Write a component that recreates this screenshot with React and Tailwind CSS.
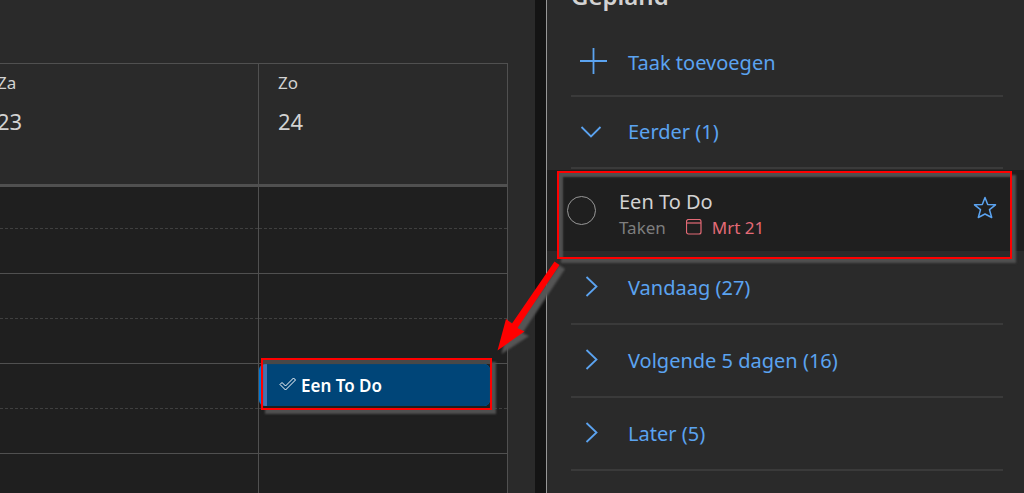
const days = [
  { name: "Za", date: "23" },
  { name: "Zo", date: "24" },
];

const groups = [
  { label: "Vandaag", count: 27 },
  { label: "Volgende 5 dagen", count: 16 },
  { label: "Later", count: 5 },
];

const slots = [0, 1, 2];

function Highlight({ className }) {
  return (
    <div
      aria-hidden="true"
      className={`pointer-events-none absolute z-10 border-2 border-[#ff0000] ${className}`}
    />
  );
}

function Arrow() {
  return (
    <svg
      viewBox="0 0 74 100"
      aria-hidden="true"
      className="pointer-events-none absolute top-[257px] -left-[42px] z-20 h-[100px] w-[74px]"
    >
      <path
        d="M62 5L68 9 25.500 73 32 76 4.500 94 12 62 19 66.500z"
        transform="translate(4 3)"
        fill="#555555"
        className="blur-[1px]"
      />
      <path d="M61.500 4.500L66.500 8 24.500 71 31.500 74.500 4.500 93.500 13 62 19 66.500z" fill="#ff0000" />
    </svg>
  );
}

function Chevron({ open }) {
  return (
    <svg viewBox="0 0 24 24" className="h-6 w-6 shrink-0" fill="none" stroke="currentColor" strokeWidth="1.8">
      {open ? <path d="M2.500 7l9.500 9.500L21.500 7" /> : <path d="M7.500 2l10 9.500-10 9.500" />}
    </svg>
  );
}

function SlotColumn({ children, className = "" }) {
  return (
    <div className={`relative bg-[#1f1f1f] ${className}`}>
      <div className="h-[42px] border-b border-dashed border-[#3f3f3f]" />
      {slots.map((slot) => (
        <div key={slot}>
          <div className="h-[45px] border-b border-[#505050]" />
          <div className="h-[45px] border-b border-dashed border-[#3f3f3f]" />
        </div>
      ))}
      {children}
    </div>
  );
}

function Calendar() {
  return (
    <section className="h-screen overflow-hidden bg-[#2a2a2a] pt-[63px] pr-[27px]">
      <div className="grid grid-cols-[258fr_250fr] border-t border-[#505050]">
        {days.map((day, i) => (
          <div
            key={day.name}
            className={`h-[120px] pt-[7px] text-[#d2d2d2] ${i === 0 ? "-ml-[3px]" : "border-x border-[#505050] pl-[19px]"}`}
          >
            <div className="text-[17px] leading-6">{day.name}</div>
            <div className="mt-2 text-[22px] leading-9">{day.date}</div>
          </div>
        ))}
      </div>
      <div className="grid grid-cols-[258fr_250fr] border-t-3 border-[#505050]">
        <SlotColumn />
        <SlotColumn className="border-x border-[#505050]">
          <button className="absolute top-[177px] right-[17px] left-0 h-[42px] overflow-hidden rounded-md bg-[#0078d4] pl-1 text-left text-[17px] font-semibold text-white">
            <span className="flex h-full items-center border-l-4 border-[#4472b0] bg-[#004578] pt-px pl-3">
              <svg viewBox="0 0 18 14" className="mr-1 mb-1 h-[14px] w-[18px]" fill="none" stroke="currentColor">
                <path d="M1 7.500l2-2 3.500 3.500L14.500 1l2 2L6.500 13z" />
              </svg>
              Een To Do
            </span>
          </button>
          <Highlight className="top-[171px] right-[15px] left-[2px] h-[52px] shadow-[4px_4px_2px_#505050,inset_0_4px_1px_#484848]" />
        </SlotColumn>
      </div>
    </section>
  );
}

function Task() {
  return (
    <div className="relative mt-px flex h-[81px] items-center bg-[#1f1f1f] pr-[27px] pl-5">
      <input
        type="checkbox"
        aria-label="Een To Do"
        className="h-[29px] w-[29px] shrink-0 appearance-none rounded-full border border-[#979797]"
      />
      <div className="ml-[23px] flex-1 pt-[6px]">
        <div className="text-[20px] leading-7 text-[#d2d2d2]">Een To Do</div>
        <div className="flex items-center text-[17px] leading-6 text-[#7e7e7e]">
          Taken
          <svg viewBox="0 0 16 16" className="mr-[10px] mb-[2px] ml-5 h-4 w-4 text-[#e46a76]" fill="none" stroke="currentColor" strokeWidth="1.2">
            <rect x="0.500" y="0.500" width="14.500" height="14.500" rx="2" />
            <path d="M0.500 4h14.500" />
          </svg>
          <span className="text-[#e46a76]">Mrt 21</span>
        </div>
      </div>
      <button aria-label="Ster" className="pb-[6px] text-[#5ba3f0]">
        <svg viewBox="0 0 24 24" className="h-6 w-6" fill="none" stroke="currentColor" strokeWidth="1.5" strokeLinejoin="round">
          <path d="M12 1.500l2.700 7 7.800.300-6 4.900 2.200 7.800-6.700-3.500L5.300 21.500l2.200-7.800-6-4.900L9.300 8.500z" />
        </svg>
      </button>
      <Highlight className="top-[1px] right-3 left-[10px] h-[88px] shadow-[4px_4px_2px_#505050,inset_4px_4px_2px_#505050]" />
    </div>
  );
}

function TaskPane() {
  return (
    <aside className="overflow-hidden border-l border-[#979797] bg-[#2a2a2a]">
      <h2 className="-mt-[20px] pl-6 text-[24px] leading-8 font-semibold text-[#d2d2d2]">Gepland</h2>
      <div className="mr-[21px] ml-6 text-[20px] text-[#5ba3f0]">
        <button className="flex h-[85px] w-full items-center border-b-2 border-[#3a3a3a] pt-4 pl-2">
          <svg viewBox="0 0 28 28" className="mb-[2px] h-7 w-7" fill="none" stroke="currentColor" strokeWidth="1.800">
            <path d="M14.500 1v26M1 14h27" />
          </svg>
          <span className="ml-[21px] pt-[2px]">Taak toevoegen</span>
        </button>
        <button className="flex h-[72px] w-full items-center border-b-2 border-[#3a3a3a] pl-2">
          <Chevron open />
          <span className="ml-[25px]">Eerder (1)</span>
        </button>
      </div>
      <Task />
      <div className="mt-px mr-[21px] ml-6 text-[20px] text-[#5ba3f0]">
        {groups.map((group) => (
          <button key={group.label} className="flex h-[73px] w-full items-center border-b-2 border-[#3a3a3a] pb-[2px] pl-2">
            <Chevron />
            <span className="ml-[25px] pt-[2px]">
              {group.label} ({group.count})
            </span>
          </button>
        ))}
      </div>
    </aside>
  );
}

export default function App() {
  return (
    <main className="grid min-h-screen grid-cols-[535fr_11px_478fr] overflow-hidden bg-[#141414] font-['Noto_Sans','Open_Sans',sans-serif]">
      <Calendar />
      <div className="relative">
        <Arrow />
      </div>
      <TaskPane />
    </main>
  );
}
